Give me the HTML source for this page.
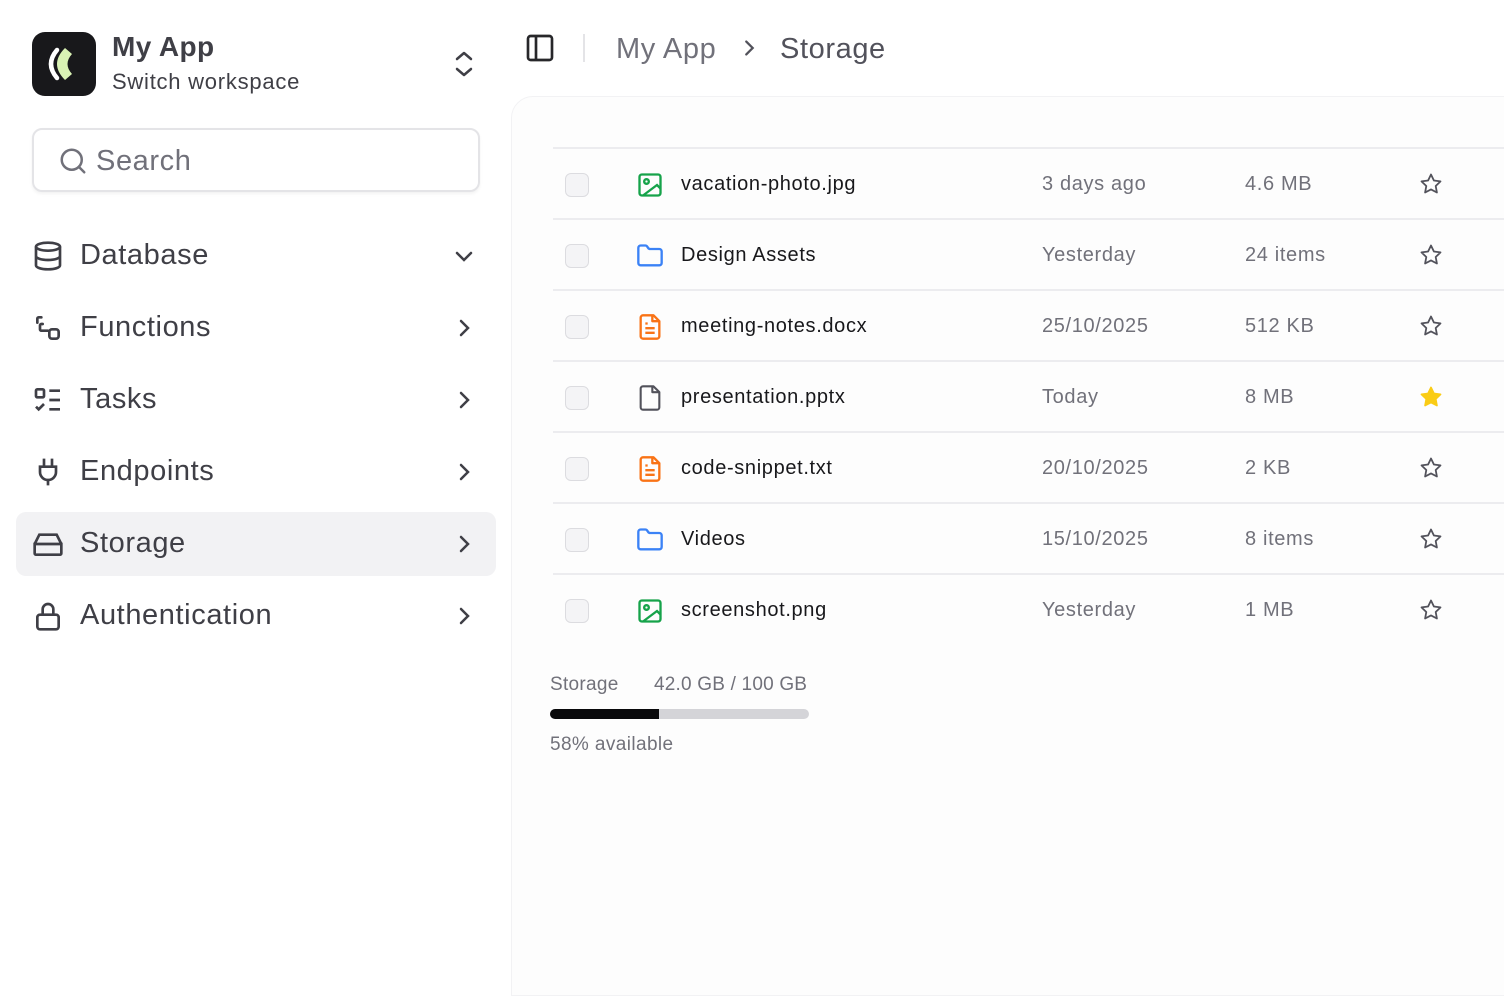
<!DOCTYPE html>
<html><head><meta charset="utf-8"><style>
*{box-sizing:border-box;margin:0;padding:0}
body{width:1504px;height:990px;background:#fff;font-family:"Liberation Sans",sans-serif;position:relative;overflow:hidden;color:#27272a}
.abs{position:absolute}
.nav{position:absolute;left:16px;width:480px;height:64px;border-radius:10px;display:flex;align-items:center;font-size:29px;color:#3f3f46;letter-spacing:0.6px}
.nav svg.i{position:absolute;left:16px}
.nav span{position:absolute;left:64px;top:15px}
.nav svg.c{position:absolute;right:20px}
.main{position:absolute;left:511px;top:96px;width:1010px;height:900px;background:#fdfdfd;border-radius:22px 0 0 0;border:1px solid #f2f2f4}
.row{position:absolute;left:42px;width:980px;height:71px;border-top:2px solid #ececef;font-size:20px;letter-spacing:0.65px}
.row .cb{position:absolute;left:12px;top:24px;width:24px;height:24px;border:1.5px solid #dcdce0;border-radius:6px;background:#f4f4f6}
.row svg.f{position:absolute;left:83px;top:22px}
.row .n{position:absolute;left:128px;top:24px;color:#18181b}
.row .d{position:absolute;left:489px;top:24px;color:#71717a}
.row .s{position:absolute;left:692px;top:24px;color:#71717a}
.row svg.st{position:absolute;left:866px;top:23px}
</style></head><body>
<div class="abs" style="left:32px;top:32px;width:64px;height:64px;background:#18181b;border-radius:13px">
<svg width="64" height="64" viewBox="0 0 64 64"><path d="M33 16 Q17 32 33 48 L40 42 Q31 32 40 22Z" fill="#d9f2b4"/><path d="M25 18 Q13 32 25 46" stroke="#fff" stroke-width="4.5" fill="none" stroke-linecap="round"/></svg></div>
<div class="abs" style="left:112px;top:31px;font-size:28px;font-weight:bold;color:#3f3f46;letter-spacing:0.4px">My App</div>
<div class="abs" style="left:112px;top:69px;font-size:22px;color:#3f3f46;letter-spacing:0.75px">Switch workspace</div>
<svg class="abs" style="left:452px;top:50px" width="24" height="28" viewBox="0 0 24 28" fill="none" stroke="#3f3f46" stroke-width="2.5" stroke-linecap="round" stroke-linejoin="round"><path d="M5 9l7-6 7 6M5 19l7 6 7-6"/></svg>
<div class="abs" style="left:32px;top:128px;width:448px;height:64px;border:2px solid #e4e4e7;border-radius:10px;box-shadow:0 2px 3px rgba(0,0,0,.05)">
<svg class="abs" style="left:24px;top:16px" width="30" height="30" viewBox="0 0 24 24" fill="none" stroke="#71717a" stroke-width="2" stroke-linecap="round"><circle cx="11" cy="11" r="8"/><path d="M21 21l-4.3-4.3"/></svg>
<span class="abs" style="left:62px;top:15px;font-size:29px;color:#71717a;letter-spacing:0.6px">Search</span></div>

<div class="nav" style="top:224px"><svg class="i" width="32" height="32" viewBox="0 0 24 24" fill="none" stroke="#3f3f46" stroke-width="2"><ellipse cx="12" cy="5" rx="9" ry="3"/><path d="M3 5v14c0 1.7 4 3 9 3s9-1.3 9-3V5M3 12c0 1.7 4 3 9 3s9-1.3 9-3"/></svg><span>Database</span><svg class="c" width="24" height="24" viewBox="0 0 24 24" fill="none" stroke="#3f3f46" stroke-width="2.5" stroke-linecap="round"><path d="M5 9l7 7 7-7"/></svg></div>
<div class="nav" style="top:296px"><svg class="i" width="32" height="32" viewBox="0 0 24 24" fill="none" stroke="#3f3f46" stroke-width="2" stroke-linecap="round"><path d="M7 4H5a1 1 0 0 0-1 1v3M8 9H7a1 1 0 0 0-1 1v3a1 1 0 0 0 1 1h5"/><rect x="13" y="13" width="7" height="7" rx="2"/></svg><span>Functions</span><svg class="c" width="24" height="24" viewBox="0 0 24 24" fill="none" stroke="#3f3f46" stroke-width="2.5" stroke-linecap="round"><path d="M9 5l7 7-7 7"/></svg></div>
<div class="nav" style="top:368px"><svg class="i" width="32" height="32" viewBox="0 0 24 24" fill="none" stroke="#3f3f46" stroke-width="2"><rect x="3" y="4" width="6" height="6" rx="1"/><path d="M3 17l2 2 4-4M13 5h8M13 12h8M13 19h8"/></svg><span>Tasks</span><svg class="c" width="24" height="24" viewBox="0 0 24 24" fill="none" stroke="#3f3f46" stroke-width="2.5" stroke-linecap="round"><path d="M9 5l7 7-7 7"/></svg></div>
<div class="nav" style="top:440px"><svg class="i" width="32" height="32" viewBox="0 0 24 24" fill="none" stroke="#3f3f46" stroke-width="2"><path d="M9 2v6M15 2v6M6 8h12v4a6 6 0 0 1-12 0zM12 18v4"/></svg><span>Endpoints</span><svg class="c" width="24" height="24" viewBox="0 0 24 24" fill="none" stroke="#3f3f46" stroke-width="2.5" stroke-linecap="round"><path d="M9 5l7 7-7 7"/></svg></div>
<div class="nav" style="top:512px;background:#f2f2f4"><svg class="i" width="32" height="32" viewBox="0 0 24 24" fill="none" stroke="#3f3f46" stroke-width="2"><path d="M2 12h20v7a1 1 0 0 1-1 1H3a1 1 0 0 1-1-1zM2 12l3.5-7h13L22 12M6 16h.01M10 16h.01"/></svg><span>Storage</span><svg class="c" width="24" height="24" viewBox="0 0 24 24" fill="none" stroke="#3f3f46" stroke-width="2.5" stroke-linecap="round"><path d="M9 5l7 7-7 7"/></svg></div>
<div class="nav" style="top:584px"><svg class="i" width="32" height="32" viewBox="0 0 24 24" fill="none" stroke="#3f3f46" stroke-width="2"><rect x="4" y="11" width="16" height="11" rx="2"/><path d="M8 11V7a4 4 0 0 1 8 0v4"/></svg><span>Authentication</span><svg class="c" width="24" height="24" viewBox="0 0 24 24" fill="none" stroke="#3f3f46" stroke-width="2.5" stroke-linecap="round"><path d="M9 5l7 7-7 7"/></svg></div>

<svg class="abs" style="left:524px;top:32px" width="32" height="32" viewBox="0 0 24 24" fill="none" stroke="#27272a" stroke-width="2"><rect x="3" y="3" width="18" height="18" rx="2"/><path d="M9 3v18"/></svg>
<div class="abs" style="left:583px;top:34px;width:2px;height:28px;background:#e4e4e7"></div>
<div class="abs" style="left:616px;top:33px;font-size:29px;color:#71717a;letter-spacing:0.6px">My App</div>
<svg class="abs" style="left:738px;top:37px" width="22" height="22" viewBox="0 0 24 24" fill="none" stroke="#52525b" stroke-width="2.5" stroke-linecap="round"><path d="M9 5l7 7-7 7"/></svg>
<div class="abs" style="left:780px;top:33px;font-size:29px;color:#52525b;letter-spacing:0.6px">Storage</div>

<div class="main"></div>
<div class="abs" style="left:511px;top:0;width:1000px;height:990px">
<div class="row" style="top:147px"><div class="cb"></div><svg class="f" width="28" height="28" viewBox="0 0 24 24" fill="none" stroke="#16a34a" stroke-width="2"><rect x="3" y="3" width="18" height="18" rx="2"/><circle cx="9" cy="9" r="2"/><path d="M21 15l-3-3L6 21"/></svg><div class="n">vacation-photo.jpg</div><div class="d">3 days ago</div><div class="s">4.6 MB</div><svg class="st" width="24" height="24" viewBox="0 0 24 24" fill="none" stroke="#52525b" stroke-width="1.8" stroke-linejoin="round"><path d="M12 2.5l2.9 6 6.6.9-4.8 4.6 1.2 6.5L12 17.4l-5.9 3.1 1.2-6.5-4.8-4.6 6.6-.9z"/></svg></div>
<div class="row" style="top:218px"><div class="cb"></div><svg class="f" width="28" height="28" viewBox="0 0 24 24" fill="none" stroke="#3b82f6" stroke-width="2" stroke-linejoin="round"><path d="M20 20a2 2 0 0 0 2-2V8a2 2 0 0 0-2-2h-7.9a2 2 0 0 1-1.7-.9l-.8-1.2A2 2 0 0 0 7.9 3H4a2 2 0 0 0-2 2v13a2 2 0 0 0 2 2z"/></svg><div class="n">Design Assets</div><div class="d">Yesterday</div><div class="s">24 items</div><svg class="st" width="24" height="24" viewBox="0 0 24 24" fill="none" stroke="#52525b" stroke-width="1.8" stroke-linejoin="round"><path d="M12 2.5l2.9 6 6.6.9-4.8 4.6 1.2 6.5L12 17.4l-5.9 3.1 1.2-6.5-4.8-4.6 6.6-.9z"/></svg></div>
<div class="row" style="top:289px"><div class="cb"></div><svg class="f" width="28" height="28" viewBox="0 0 24 24" fill="none" stroke="#f97316" stroke-width="2" stroke-linejoin="round"><path d="M15 2H6a2 2 0 0 0-2 2v16a2 2 0 0 0 2 2h12a2 2 0 0 0 2-2V7z"/><path d="M14 2v5h6M16 13H8M16 17H8M10 9H8"/></svg><div class="n">meeting-notes.docx</div><div class="d">25/10/2025</div><div class="s">512 KB</div><svg class="st" width="24" height="24" viewBox="0 0 24 24" fill="none" stroke="#52525b" stroke-width="1.8" stroke-linejoin="round"><path d="M12 2.5l2.9 6 6.6.9-4.8 4.6 1.2 6.5L12 17.4l-5.9 3.1 1.2-6.5-4.8-4.6 6.6-.9z"/></svg></div>
<div class="row" style="top:360px"><div class="cb"></div><svg class="f" width="28" height="28" viewBox="0 0 24 24" fill="none" stroke="#52525b" stroke-width="1.8" stroke-linejoin="round"><path d="M15 2H6a2 2 0 0 0-2 2v16a2 2 0 0 0 2 2h12a2 2 0 0 0 2-2V7z"/><path d="M14 2v5h6"/></svg><div class="n">presentation.pptx</div><div class="d">Today</div><div class="s">8 MB</div><svg class="st" width="24" height="24" viewBox="0 0 24 24" fill="#facc15" stroke="#facc15" stroke-width="1.8" stroke-linejoin="round"><path d="M12 2.5l2.9 6 6.6.9-4.8 4.6 1.2 6.5L12 17.4l-5.9 3.1 1.2-6.5-4.8-4.6 6.6-.9z"/></svg></div>
<div class="row" style="top:431px"><div class="cb"></div><svg class="f" width="28" height="28" viewBox="0 0 24 24" fill="none" stroke="#f97316" stroke-width="2" stroke-linejoin="round"><path d="M15 2H6a2 2 0 0 0-2 2v16a2 2 0 0 0 2 2h12a2 2 0 0 0 2-2V7z"/><path d="M14 2v5h6M16 13H8M16 17H8M10 9H8"/></svg><div class="n">code-snippet.txt</div><div class="d">20/10/2025</div><div class="s">2 KB</div><svg class="st" width="24" height="24" viewBox="0 0 24 24" fill="none" stroke="#52525b" stroke-width="1.8" stroke-linejoin="round"><path d="M12 2.5l2.9 6 6.6.9-4.8 4.6 1.2 6.5L12 17.4l-5.9 3.1 1.2-6.5-4.8-4.6 6.6-.9z"/></svg></div>
<div class="row" style="top:502px"><div class="cb"></div><svg class="f" width="28" height="28" viewBox="0 0 24 24" fill="none" stroke="#3b82f6" stroke-width="2" stroke-linejoin="round"><path d="M20 20a2 2 0 0 0 2-2V8a2 2 0 0 0-2-2h-7.9a2 2 0 0 1-1.7-.9l-.8-1.2A2 2 0 0 0 7.9 3H4a2 2 0 0 0-2 2v13a2 2 0 0 0 2 2z"/></svg><div class="n">Videos</div><div class="d">15/10/2025</div><div class="s">8 items</div><svg class="st" width="24" height="24" viewBox="0 0 24 24" fill="none" stroke="#52525b" stroke-width="1.8" stroke-linejoin="round"><path d="M12 2.5l2.9 6 6.6.9-4.8 4.6 1.2 6.5L12 17.4l-5.9 3.1 1.2-6.5-4.8-4.6 6.6-.9z"/></svg></div>
<div class="row" style="top:573px"><div class="cb"></div><svg class="f" width="28" height="28" viewBox="0 0 24 24" fill="none" stroke="#16a34a" stroke-width="2"><rect x="3" y="3" width="18" height="18" rx="2"/><circle cx="9" cy="9" r="2"/><path d="M21 15l-3-3L6 21"/></svg><div class="n">screenshot.png</div><div class="d">Yesterday</div><div class="s">1 MB</div><svg class="st" width="24" height="24" viewBox="0 0 24 24" fill="none" stroke="#52525b" stroke-width="1.8" stroke-linejoin="round"><path d="M12 2.5l2.9 6 6.6.9-4.8 4.6 1.2 6.5L12 17.4l-5.9 3.1 1.2-6.5-4.8-4.6 6.6-.9z"/></svg></div>
</div>
<div class="abs" style="left:550px;top:674px;font-size:19px;color:#71717a;letter-spacing:0.3px">Storage</div>
<div class="abs" style="left:654px;top:674px;font-size:19px;color:#71717a;letter-spacing:0.2px">42.0 GB / 100 GB</div>
<div class="abs" style="left:550px;top:709px;width:259px;height:10px;background:#d4d4d8;border-radius:5px;overflow:hidden"><div style="width:109px;height:10px;background:#09090b"></div></div>
<div class="abs" style="left:550px;top:734px;font-size:19px;color:#71717a;letter-spacing:0.4px">58% available</div>
</body></html>
